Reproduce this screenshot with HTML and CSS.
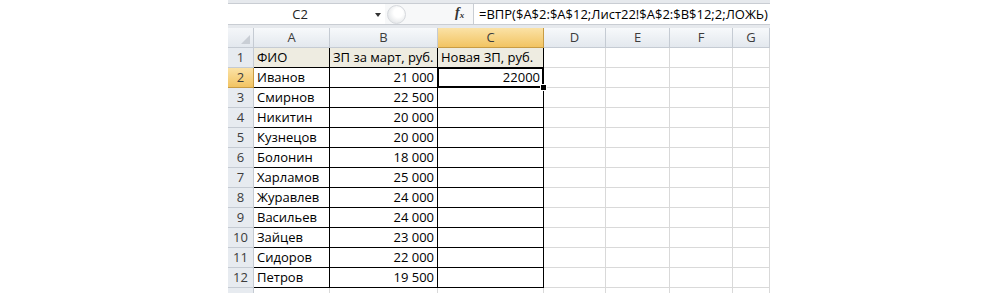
FILE: index.html
```html
<!DOCTYPE html>
<html lang="ru">
<head>
    <meta charset="UTF-8">
    <title>ВПР</title>
    <link rel="stylesheet" href="styles.css">
</head>
<body>
    <div class="window">
        <div class="formula-bar">
            <div class="name-box">C2</div>
            <div class="name-arrow"></div>
            <div class="tools">
                <span class="round-btn"></span>
                <span class="fx">f<sub>x</sub></span>
            </div>
            <div class="formula">=ВПР($A$2:$A$12;Лист22!$A$2:$B$12;2;ЛОЖЬ)</div>
        </div>

        <div class="sheet" id="sheet"></div>
    </div>

    <script>
        const columns = ["A", "B", "C", "D", "E", "F", "G"];
        const rows = [
            ["ФИО", "ЗП за март, руб.", "Новая ЗП, руб."],
            ["Иванов", "21 000", "22000"],
            ["Смирнов", "22 500", ""],
            ["Никитин", "20 000", ""],
            ["Кузнецов", "20 000", ""],
            ["Болонин", "18 000", ""],
            ["Харламов", "25 000", ""],
            ["Журавлев", "24 000", ""],
            ["Васильев", "24 000", ""],
            ["Зайцев", "23 000", ""],
            ["Сидоров", "22 000", ""],
            ["Петров", "19 500", ""],
            ["", "", ""]
        ];

        const sheet = document.getElementById("sheet");
        let html = '<div class="corner"></div>';

        columns.forEach(col => {
            const cls = col === "C" ? "col-head active" : "col-head";
            html += `<div class="${cls}">${col}</div>`;
        });

        rows.forEach((row, i) => {
            const num = i + 1;
            const inTable = num <= 12;
            let rowCls = "row-head";
            if (num === 2) rowCls += " active";
            // last row is only a sliver at the bottom edge, no number shown
            html += `<div class="${rowCls}">${inTable ? num : ""}</div>`;

            columns.forEach((col, j) => {
                let cls = "cell";
                const value = row[j] || "";
                if (inTable && j < 3) cls += " table";
                if (num === 1 && j < 3) cls += " title";
                if (num > 1 && (j === 1 || j === 2)) cls += " num";
                if (num === 2 && j === 2) cls += " selected";
                html += `<div class="${cls}">${value}</div>`;
            });
        });

        sheet.innerHTML = html;
    </script>
</body>
</html>
```

FILE: styles.css
```css
body {
    margin: 0;
    height: 293px;
    background: #ffffff;
    font-family: "Open Sans", "Noto Sans", sans-serif;
    font-size: 13px;
    color: #000;
    overflow: hidden;
}

.window {
    margin-left: 228px;
    width: 542px;
}

/* formula bar */
.formula-bar {
    height: 28px;
    box-sizing: border-box;
    padding: 3px 0;
    background: #e6e9ed;
    display: flex;
}
.name-box {
    width: 144px;
    background: #ffffff;
    border-top: 1px solid #c9cdd3;
    border-bottom: 1px solid #c9cdd3;
    text-align: center;
    line-height: 20px;
    color: #222;
}
.name-arrow {
    width: 13px;
    background: #ffffff;
    border-top: 1px solid #c9cdd3;
    border-bottom: 1px solid #c9cdd3;
    position: relative;
}
.name-arrow::after {
    content: "";
    position: absolute;
    left: 3px;
    top: 9px;
    border-left: 3px solid transparent;
    border-right: 3px solid transparent;
    border-top: 4px solid #333;
}
.tools {
    width: 88px;
    background: #f7f8f9;
    border-top: 1px solid #c9cdd3;
    border-bottom: 1px solid #c9cdd3;
    position: relative;
}
.round-btn {
    position: absolute;
    left: 2px;
    top: 1px;
    width: 17px;
    height: 17px;
    border-radius: 50%;
    border: 1px solid #d6d9dd;
    background: radial-gradient(circle at 60% 40%, #ffffff 30%, #e8eaec 70%);
}
.fx {
    position: absolute;
    left: 70px;
    top: 1px;
    font-family: "Liberation Serif", serif;
    font-style: italic;
    font-weight: bold;
    font-size: 14px;
    color: #333;
}
.fx sub {
    font-size: 9px;
    vertical-align: -1px;
}
.formula {
    flex: 1;
    background: #ffffff;
    border: 1px solid #c9cdd3;
    border-right: none;
    padding-left: 5px;
    line-height: 20px;
    font-size: 13px;
    white-space: nowrap;
    overflow: hidden;
}

/* grid */
.sheet {
    display: grid;
    grid-template-columns: 26px 76px 108px 106px 62px 64px 63px 37px;
    grid-auto-rows: 20px;
}
.sheet > div {
    box-sizing: border-box;
    border-right: 1px solid #d9d9d9;
    border-bottom: 1px solid #d9d9d9;
    line-height: 19px;
    white-space: nowrap;
    overflow: hidden;
}
.corner {
    background: linear-gradient(#f4f6f9, #e3e8ee);
    position: relative;
    border-color: #c5cbd3 !important;
}
.corner::after {
    content: "";
    position: absolute;
    right: 3px;
    bottom: 3px;
    border-left: 9px solid transparent;
    border-bottom: 9px solid #c9ced5;
}
.col-head {
    background: linear-gradient(#f7f9fb, #e3e8ee);
    border-color: #c5cbd3 !important;
    text-align: center;
    color: #3c3c3c;
}
.row-head {
    background: #e7ebf0;
    border-color: #c5cbd3 !important;
    text-align: center;
    color: #3c3c3c;
}
.col-head.active,
.row-head.active {
    background: linear-gradient(#fbe2a6, #f2c462);
    border-color: #c89c44 !important;
}
.cell {
    padding: 0 3px;
}
.cell.table {
    border-color: #000 !important;
}
.cell.title {
    background: #eeece1;
}
.cell.num {
    text-align: right;
}
.cell.selected {
    position: relative;
    overflow: visible !important;
}
.cell.selected::before {
    content: "";
    position: absolute;
    left: -1px;
    top: -1px;
    right: -1px;
    bottom: -1px;
    border: 2px solid #000;
}
.cell.selected::after {
    content: "";
    position: absolute;
    right: -4px;
    bottom: -4px;
    width: 5px;
    height: 5px;
    background: #000;
    border: 1px solid #fff;
}
```
